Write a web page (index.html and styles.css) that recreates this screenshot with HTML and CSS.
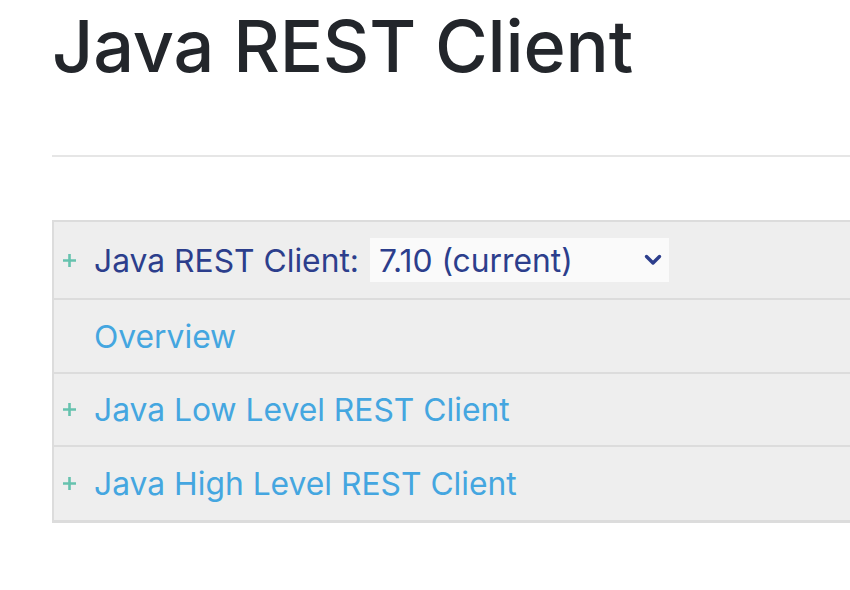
FILE: index.html
```html
<!DOCTYPE html>
<html>
<head>
<meta charset="utf-8">
<link rel="stylesheet" href="styles.css">
</head>
<body>
<div class="page">
  <h1 class="title">Java REST Client</h1>
  <hr class="rule">
  <div class="toc">
    <div class="row row-first">
      <span class="plus"><svg width="15" height="15" viewBox="0 0 15 15"><path d="M7.5 1 V14 M1 7.5 H14" stroke="#66c2ae" stroke-width="2.6"/></svg></span>
      <span class="label">Java REST Client:</span>
      <div class="select">
        <span class="select-text">7.10 (current)</span>
        <svg class="chev" width="18" height="12" viewBox="0 0 18 12"><path d="M2.5 2.5 L9 9 L15.5 2.5" fill="none" stroke="#2c3e8c" stroke-width="3.4" stroke-linecap="round" stroke-linejoin="round"/></svg>
      </div>
    </div>
    <div class="row">
      <span class="plus"></span>
      <a class="link">Overview</a>
    </div>
    <div class="row row-third">
      <span class="plus"><svg width="15" height="15" viewBox="0 0 15 15"><path d="M7.5 1 V14 M1 7.5 H14" stroke="#66c2ae" stroke-width="2.6"/></svg></span>
      <a class="link">Java Low Level REST Client</a>
    </div>
    <div class="row row-last">
      <span class="plus"><svg width="15" height="15" viewBox="0 0 15 15"><path d="M7.5 1 V14 M1 7.5 H14" stroke="#66c2ae" stroke-width="2.6"/></svg></span>
      <a class="link">Java High Level REST Client</a>
    </div>
  </div>
</div>
</body>
</html>
```

FILE: styles.css
```css
html, body {
  margin: 0;
  padding: 0;
  background: #fff;
}
body {
  font-family: Inter, "Noto Sans", sans-serif;
  overflow: hidden;
}
.page {
  padding-left: 52px;
}
.title {
  margin: 3px 0 0 0;
  font-size: 72px;
  line-height: 86px;
  font-weight: 500;
  color: #23262b;
  letter-spacing: -0.2px;
}
.rule {
  margin: 66px 0 0 0;
  border: 0;
  height: 2px;
  background: #e6e6e6;
}
.toc {
  margin-top: 63px;
  background: #eeeeee;
  border-top: 2px solid #dcdcdc;
  border-left: 2px solid #dcdcdc;
  border-bottom: 3px solid #dcdcdc;
}
.row {
  display: flex;
  align-items: center;
  height: 72px;
  border-top: 2px solid #dcdcdc;
  font-size: 31.8px;
}
.row-first {
  border-top: 0;
  height: 76px;
}
.row-third {
  height: 71px;
}
.row-last {
  height: 73px;
}
.plus {
  width: 40px;
  padding-left: 8px;
  box-sizing: border-box;
  display: flex;
  align-items: center;
}
.plus svg {
  display: block;
}
.label {
  color: #2c3e8c;
}
.link {
  color: #44a6e0;
}
.select {
  margin-left: 11px;
  width: 299px;
  height: 44px;
  background: #fafafa;
  display: flex;
  align-items: center;
  justify-content: space-between;
  padding: 0 7px 0 9px;
  box-sizing: border-box;
  color: #2c3e8c;
}
.chev {
  display: block;
}
```
